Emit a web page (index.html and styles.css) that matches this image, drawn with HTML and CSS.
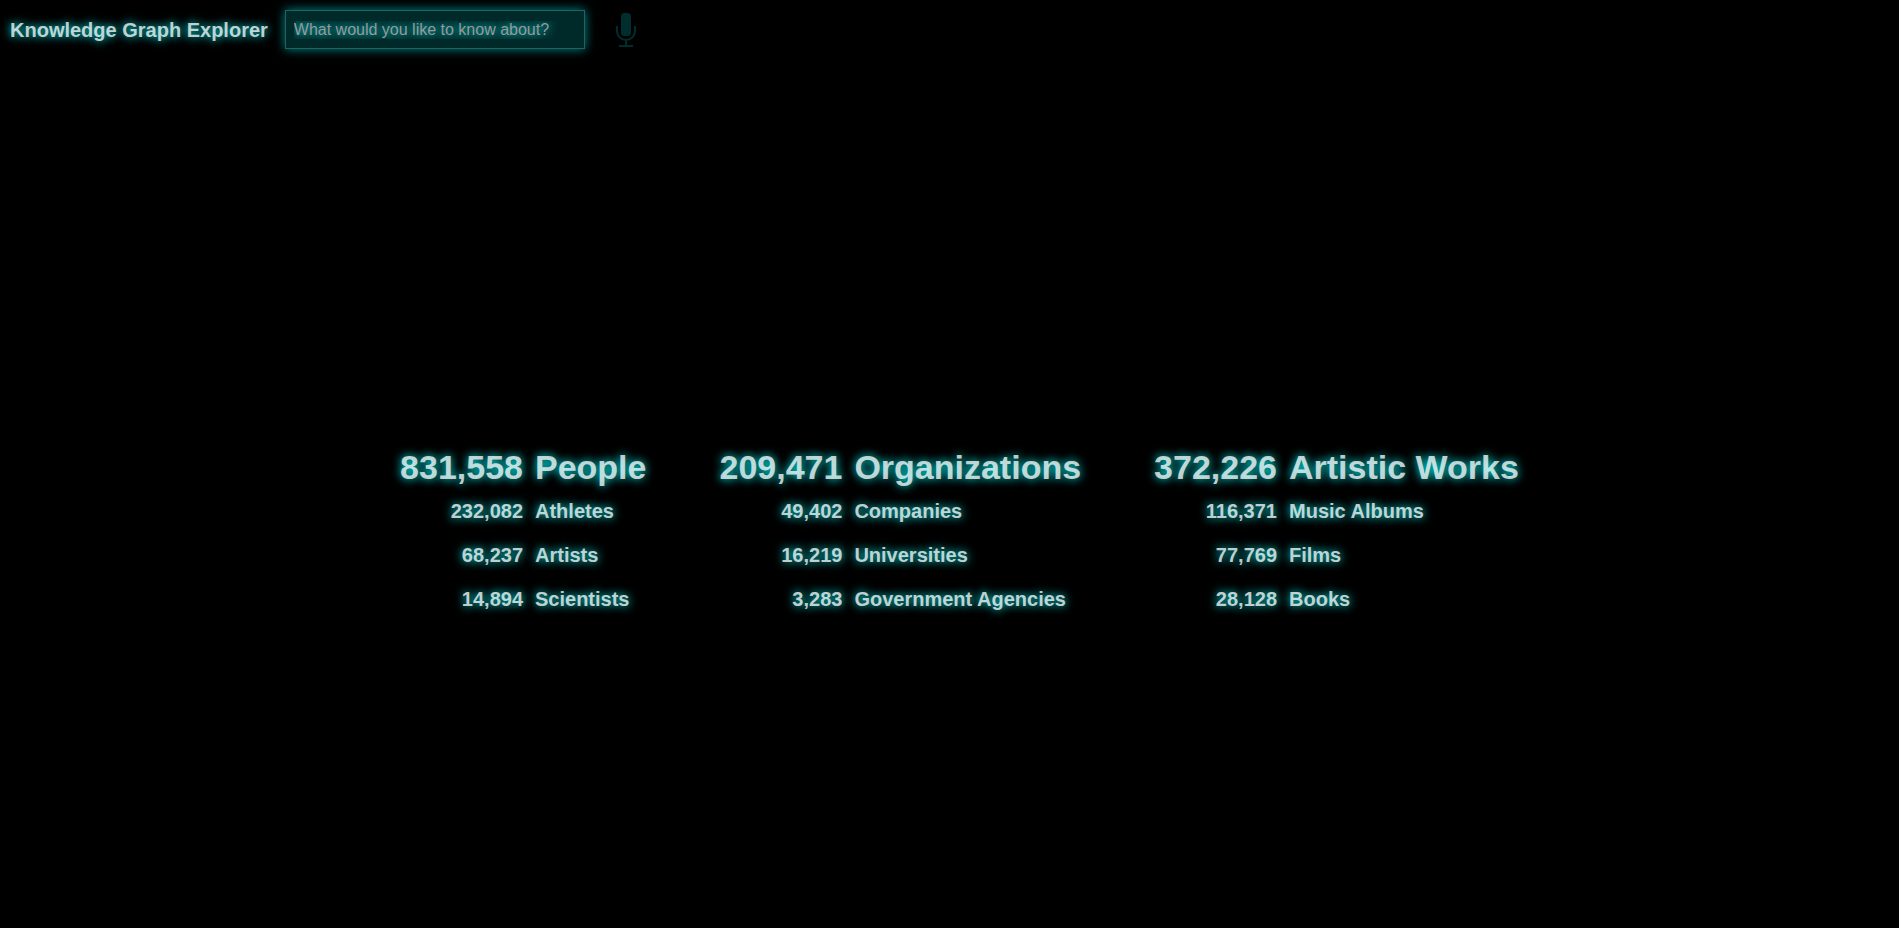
FILE: index.html
```html
<!DOCTYPE html>
<html lang="en">
<head>
<meta charset="utf-8">
<title>Knowledge Graph Explorer</title>
<link rel="stylesheet" href="styles.css">
</head>
<body>
<header class="toolbar">
  <h1 class="title">Knowledge Graph Explorer</h1>
  <input class="search" type="text" aria-label="Search" placeholder="What would you like to know about?">
  <button class="mic" type="button" aria-label="Speak">
    <svg class="mic-icon" viewBox="0 0 20 36" aria-hidden="true">
      <rect x="5" y="1" width="10" height="23" rx="3.5" fill="currentColor"/>
      <path d="M1 14v5a9 9 0 0 0 18 0v-5M10 28v6M3 34h14" fill="none" stroke="currentColor" stroke-width="2"/>
    </svg>
  </button>
</header>
<main class="stats">
  <table class="group">
    <thead><tr><th>831,558</th><th>People</th></tr></thead>
    <tbody>
      <tr><td>232,082</td><td>Athletes</td></tr>
      <tr><td>68,237</td><td>Artists</td></tr>
      <tr><td>14,894</td><td>Scientists</td></tr>
    </tbody>
  </table>
  <table class="group">
    <thead><tr><th>209,471</th><th>Organizations</th></tr></thead>
    <tbody>
      <tr><td>49,402</td><td>Companies</td></tr>
      <tr><td>16,219</td><td>Universities</td></tr>
      <tr><td>3,283</td><td>Government Agencies</td></tr>
    </tbody>
  </table>
  <table class="group">
    <thead><tr><th>372,226</th><th>Artistic Works</th></tr></thead>
    <tbody>
      <tr><td>116,371</td><td>Music Albums</td></tr>
      <tr><td>77,769</td><td>Films</td></tr>
      <tr><td>28,128</td><td>Books</td></tr>
    </tbody>
  </table>
</main>
</body>
</html>
```
FILE: styles.css
```css
* {
  box-sizing: border-box;
}

body {
  display: flex;
  flex-direction: column;
  min-height: 100vh;
  margin: 0;
  background: #000;
  color: rgba(255, 255, 255, 0.76);
  font-family: "Liberation Sans", Arial, sans-serif;
  font-size: 20px;
  font-weight: bold;
  text-shadow: 0 0 10px #0ff;
}

.toolbar {
  display: flex;
  align-items: center;
  padding: 10px;
}

.title {
  margin: 0 17px 0 0;
  font-size: 20px;
  line-height: 24px;
}

.search {
  width: 300px;
  height: 39px;
  padding: 0 8px;
  border: 1px solid #1f6464;
  background: #002a2a;
  box-shadow: 0 0 10px #008b8b;
  color: inherit;
  font: 16px "Liberation Sans", Arial, sans-serif;
  text-shadow: inherit;
}

.search::placeholder {
  color: #999;
}

.mic {
  margin-left: 31px;
  padding: 0;
  border: 0;
  background: none;
  color: #002e2e;
}

.mic-icon {
  display: block;
  width: 20px;
  height: 36px;
}

.stats {
  display: flex;
  justify-content: center;
  gap: 73px;
  margin: auto 0;
  padding: 79px 0 0 20px;
}

.group {
  border-collapse: collapse;
  line-height: 24px;
}

.group th,
.group td {
  height: 44px;
  padding: 0;
  text-align: left;
  white-space: nowrap;
}

.group th {
  font-size: 34px;
}

.group tr > :first-child {
  padding-right: 12px;
  text-align: right;
}
```
